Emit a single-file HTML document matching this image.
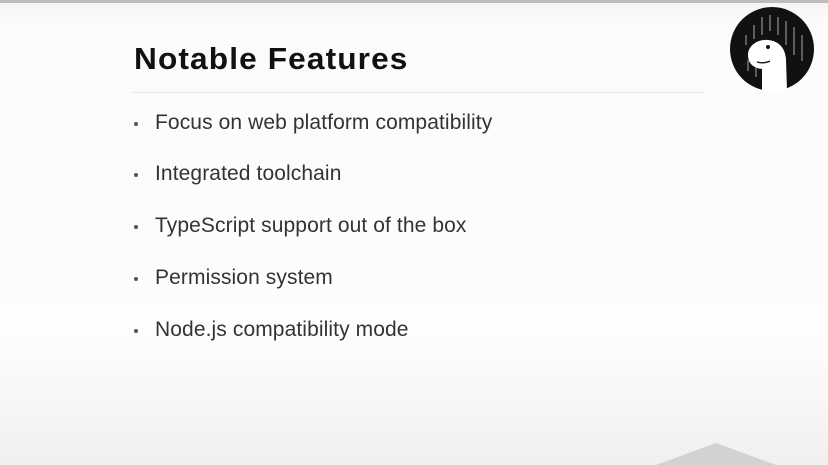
<!DOCTYPE html>
<html><head><style>
html,body{margin:0;padding:0}
body{width:828px;height:463px;overflow:hidden;position:relative;font-family:"Liberation Sans",Arial,sans-serif;
background:linear-gradient(#eeeeee 0px,#f6f6f6 4px,#fbfbfb 20px,#fdfdfd 340px,#f0f0f0 463px);}
.top{position:absolute;left:0;top:0;width:828px;height:3px;background:#bdbdbd}
h1{position:absolute;left:134px;top:41px;margin:0;font-size:31px;font-weight:bold;color:#111;letter-spacing:1.1px;transform:scaleX(1.02);transform-origin:left}
.rule{position:absolute;left:133px;top:92px;width:572px;height:1px;background:#e4e4e4}
.b{position:absolute;left:155px;font-size:21px;color:#333;letter-spacing:0.1px}
.d{position:absolute;left:134px;width:4px;height:4px;border-radius:2px;background:#555}
.tri{position:absolute;left:656px;top:443px;width:0;height:0;border-left:60px solid transparent;border-right:60px solid transparent;border-bottom:22px solid #d2d2d2}
</style></head><body>
<div class="top"></div>
<h1>Notable Features</h1>
<div class="rule"></div>
<div class="d" style="top:122px"></div><div class="b" style="top:111px">Focus on web platform compatibility</div>
<div class="d" style="top:173px"></div><div class="b" style="top:162px">Integrated toolchain</div>
<div class="d" style="top:225px"></div><div class="b" style="top:214px">TypeScript support out of the box</div>
<div class="d" style="top:277px"></div><div class="b" style="top:266px">Permission system</div>
<div class="d" style="top:329px"></div><div class="b" style="top:318px">Node.js compatibility mode</div>
<svg style="position:absolute;left:728px;top:5px" width="88" height="88" viewBox="0 0 88 88">
<circle cx="44" cy="44" r="42" fill="#111"/>
<g stroke="#777" stroke-width="1.5">
<line x1="18" y1="30" x2="18" y2="40"/><line x1="26" y1="20" x2="26" y2="34"/><line x1="34" y1="12" x2="34" y2="30"/><line x1="42" y1="10" x2="42" y2="26"/><line x1="50" y1="12" x2="50" y2="30"/><line x1="58" y1="16" x2="58" y2="40"/><line x1="66" y1="22" x2="66" y2="50"/><line x1="74" y1="30" x2="74" y2="56"/><line x1="20" y1="55" x2="20" y2="66"/><line x1="28" y1="60" x2="28" y2="72"/>
</g>
<path d="M20 50 C20 41 29 34 40 35 C51 36 57 43 58 54 L59 86 L34 86 C34 76 34 68 34 64 C25 63 20 58 20 50 Z" fill="#fff"/>
<circle cx="40" cy="42" r="2" fill="#111"/>
<path d="M29 57 Q36 59 42 56" stroke="#111" stroke-width="1.3" fill="none"/>
</svg>
<div class="tri"></div>
</body></html>
